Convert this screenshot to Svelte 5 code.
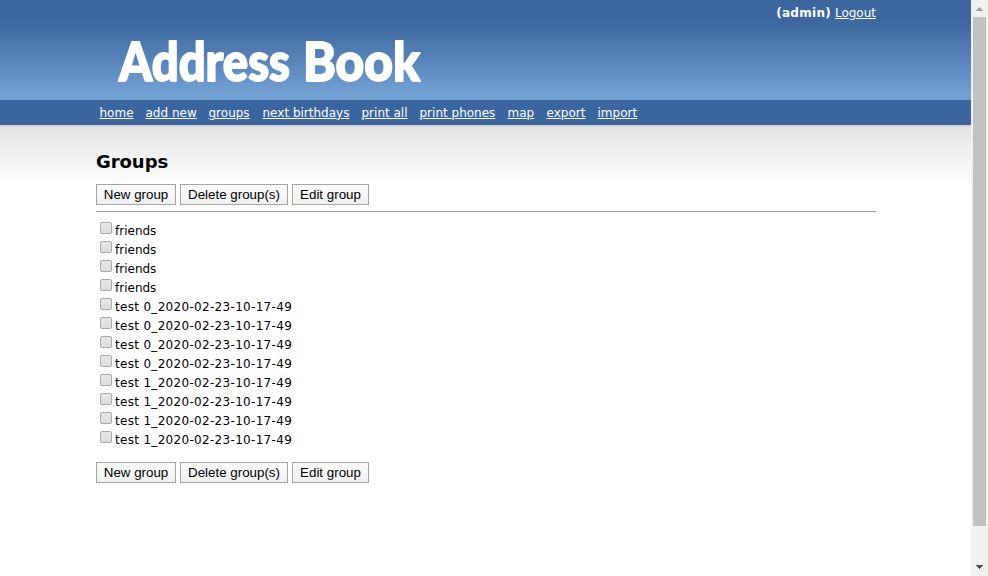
<script>
  const links = [
    ['home', 34], ['add new', 51], ['groups', 42], ['next birthdays', 87],
    ['print all', 46], ['print phones', 76], ['map', 27], ['export', 39], ['import', 40]
  ];
  const groups = [
    ...Array(4).fill('friends'),
    ...Array(4).fill('test 0_2020-02-23-10-17-49'),
    ...Array(4).fill('test 1_2020-02-23-10-17-49')
  ];
</script>

{#snippet actions()}
  <div class="actions">
    <button style:width="80px">New group</button>
    <button style:width="108px">Delete group(s)</button>
    <button style:width="77px">Edit group</button>
  </div>
{/snippet}

<div class="window">
  <div class="page">
    <header>
      <div class="inner">
        <div class="account"><b>(admin)</b> <a href="#logout">Logout</a></div>
        <svg class="logo" width="330" height="70" viewBox="110 30 330 70" role="img" aria-label="Address Book">
          <text x="119" y="81" textLength="171" lengthAdjust="spacingAndGlyphs">Address</text>
          <text x="303" y="81" textLength="117" lengthAdjust="spacingAndGlyphs">Book</text>
        </svg>
      </div>
    </header>
    <nav>
      {#each links as [label, width]}
        <a href="#{label}" style:width="{width}px">{label}</a>
      {/each}
    </nav>
    <main>
      <h1>Groups</h1>
      {@render actions()}
      <hr />
      <ul>
        {#each groups as name}
          <li><label><input type="checkbox" /><span class:dated={name.startsWith('test')}>{name}</span></label></li>
        {/each}
      </ul>
      {@render actions()}
    </main>
  </div>
  <aside class="scrollbar">
    <svg width="17" height="17" shape-rendering="crispEdges"><path d="M8 7h1v1h1v1h1v1h1v1H5v-1h1V9h1V8h1z" fill="#a3a3a3" /></svg>
    <div class="thumb"></div>
    <svg width="17" height="17" shape-rendering="crispEdges"><path d="M5 6h7v1h-1v1h-1v1H9v1H8V9H7V8H6V7H5z" fill="#505050" /></svg>
  </aside>
</div>

<style>
  :global(body) { margin: 0; overflow: hidden; }
  .window { display: flex; width: 988px; height: 576px; background: #fff; font: 12px "DejaVu Sans", sans-serif; color: #000; }
  .page { width: 971px; background: #fff; }
  header { height: 100px; background: linear-gradient(#3c689f 0, #3c689f 20px, #5682b8 58px, #72a0d2 92px, #72a0d2 100px); }
  .inner { display: flex; flex-direction: column; width: 780px; margin-left: 96px; color: #fff; }
  .account { height: 30px; line-height: 26px; text-align: right; white-space: nowrap; }
  .account b { letter-spacing: .3px; }
  a { color: #fff; text-decoration: underline; text-underline-offset: 1px; text-decoration-thickness: 1px; }
  .logo { margin-left: 14px; overflow: visible; }
  .logo text { font: 900 53px Lato, sans-serif; fill: #fff; stroke: #fff; stroke-width: 1.8px; stroke-linejoin: round; }
  nav { display: flex; gap: 12px; box-sizing: border-box; height: 25px; padding-left: 99.5px; background: #3a659f; border-bottom: 1px solid #43658f; }
  nav a { line-height: 26px; height: 24px; white-space: nowrap; letter-spacing: 0; }
  main { box-sizing: border-box; height: 451px; padding: 25px 95px 0 96px; background: linear-gradient(#d5d8e1 0, #d5d8e1 2px, #e3e3e3 2px, #fff 60px); }
  h1 { margin: 0 0 11px; height: 23px; line-height: 23px; font-size: 18px; letter-spacing: -.05px; }
  .actions { display: flex; gap: 4px; height: 21px; }
  button { box-sizing: border-box; height: 21px; padding: 0; border: 1px solid #a4a4a4; border-radius: 0; background: linear-gradient(#fbfbfb, #f0f0f0); box-shadow: none; font: 13.333px/19px "Liberation Sans", sans-serif; color: #000; white-space: nowrap; }
  hr { height: 1px; margin: 6px 0 9px; border: 0; background: #999; }
  ul { list-style: none; margin: 0 0 13px; padding: 0; }
  li { height: 19px; }
  label { display: flex; align-items: flex-start; padding-left: 4px; line-height: 21px; height: 19px; }
  .dated { letter-spacing: .31px; }
  input { appearance: none; box-sizing: border-box; width: 12px; height: 12px; margin: 1px 3px 0 0; border: 1px solid #aaa; border-radius: 2px; background: linear-gradient(#e8e8e8, #dcdcdc); }
  .scrollbar { display: flex; flex-direction: column; width: 17px; height: 576px; background: #f1f1f1; }
  .scrollbar svg { display: block; }
  .thumb { width: 13px; height: 509px; margin: 0 2px 33px; background: #c1c1c1; }
</style>
